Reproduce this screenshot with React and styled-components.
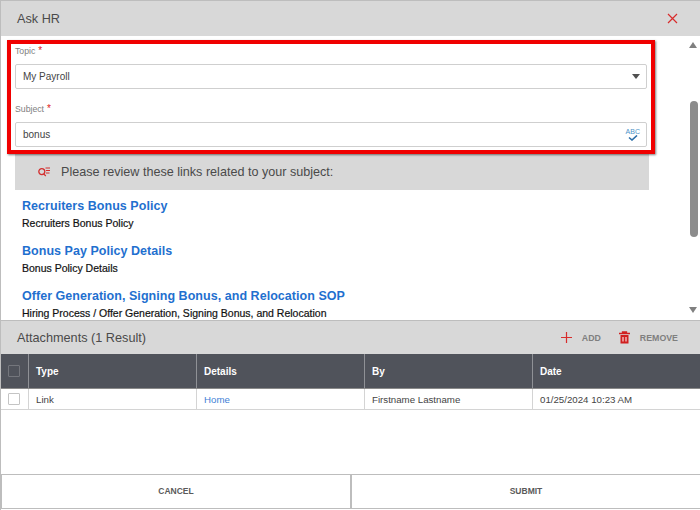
import React from 'react';
import styled, { createGlobalStyle } from 'styled-components';

const Global = createGlobalStyle`
  html, body { margin: 0; padding: 0; background: #fff; }
  body { font-family: "Liberation Sans", Arial, sans-serif; }
  * { box-sizing: border-box; }
`;

const Dialog = styled.div`
  width: 700px;
  height: 510px;
  display: flex;
  flex-direction: column;
  border-left: 1px solid #bdbdbd;
  background: #fff;
  overflow: hidden;
`;

const Bar = styled.div`
  flex: none;
  height: ${({ $h }) => $h}px;
  display: flex;
  align-items: center;
  justify-content: space-between;
  background: #d8d8d8;
  padding: 0 ${({ $right }) => $right}px 0 16px;
  border-top: 1px solid #bdbdbd;
  color: #4a4a4a;
  font-size: 12.7px;
`;

const Close = styled.svg`
  width: 11px;
  height: 11px;
`;

const Body = styled.div`
  position: relative;
  flex: none;
  height: 284px;
  display: flex;
  overflow: hidden;
`;

const Content = styled.div`
  flex: 1;
  padding: 9px 41px 0 14px;
  margin-right: 10px;
  min-width: 0;
`;

const Label = styled.div`
  height: 19px;
  font-size: 8.7px;
  line-height: 12px;
  color: #808080;
  b { color: #e02020; font-weight: 400; font-size: 10px; margin-left: 3px; }
`;

const Field = styled.div`
  height: 25px;
  margin-bottom: ${({ $mb }) => $mb}px;
  margin-right: 2px;
  display: flex;
  align-items: center;
  justify-content: space-between;
  padding: 0 6px 0 7px;
  border: 1px solid #cfcfcf;
  border-radius: 2px;
  font-size: 10px;
  color: #444;
`;

const Caret = styled.span`
  width: 0;
  height: 0;
  border-left: 4px solid transparent;
  border-right: 4px solid transparent;
  border-top: 5px solid #505050;
`;

const Spell = styled.span`
  display: flex;
  flex-direction: column;
  align-items: center;
  font-size: 7px;
  line-height: 7px;
  color: #4f94c8;
  svg { display: block; }
`;

const Notice = styled.div`
  height: 37px;
  margin-top: 6px;
  padding: 0 0 0 23px;
  display: flex;
  align-items: center;
  gap: 11px;
  background: #d8d8d8;
  color: #4a4a4a;
  font-size: 12.6px;
`;

const Links = styled.div`
  padding: 8px 7px 0;
`;

const LinkItem = styled.div`
  height: 45px;
`;

const Title = styled.div`
  font-size: 12.5px;
  line-height: 16px;
  font-weight: 700;
  letter-spacing: 0.04px;
  color: #1f70cf;
`;

const Sub = styled.div`
  margin-top: 3px;
  font-size: 10.5px;
  line-height: 13px;
  color: #111;
  -webkit-text-stroke: 0.2px #111;
`;

const Highlight = styled.div`
  position: absolute;
  left: 6px;
  top: 4px;
  width: 648px;
  height: 114px;
  border: 4px solid #f00000;
  box-shadow: 1px 1px 2px rgba(0, 0, 0, 0.5);
`;

const Scroll = styled.div`
  position: absolute;
  right: 0;
  top: 0;
  bottom: 0;
  width: 11px;
  background: #fff;
`;

const Arrow = styled.span`
  position: absolute;
  left: 0;
  top: ${({ $top }) => $top}px;
  width: 0;
  height: 0;
  border-left: 4.5px solid transparent;
  border-right: 4.5px solid transparent;
  ${({ $up }) => ($up ? 'border-bottom: 6px solid #808080;' : 'border-top: 6px solid #808080;')}
`;

const Thumb = styled.span`
  position: absolute;
  left: 1px;
  top: 65px;
  width: 8px;
  height: 136px;
  border-radius: 4px;
  background: #8c8c8c;
`;

const Actions = styled.div`
  display: flex;
  align-items: center;
  gap: 10px;
`;

const Action = styled.span`
  font-size: 8.8px;
  font-weight: 700;
  color: #7f7f7f;
  margin-right: 8px;
  &:last-child { margin-right: 0; }
`;

const Row = styled.div`
  flex: none;
  display: grid;
  grid-template-columns: 27px 168px 168px 168px 168px;
  height: ${({ $h }) => $h}px;
  background: ${({ $head }) => ($head ? '#50535b' : '#fff')};
  color: ${({ $head }) => ($head ? '#fff' : '#444')};
  font-size: ${({ $head }) => ($head ? 10 : 9.7)}px;
  font-weight: ${({ $head }) => ($head ? 700 : 400)};
  border-bottom: 1px solid ${({ $head }) => ($head ? '#8a8a8a' : '#d4d4d4')};
`;

const Cell = styled.div`
  display: flex;
  align-items: center;
  padding-left: 7px;
  border-left: 1px solid ${({ $head }) => ($head ? '#8f9196' : '#d4d4d4')};
  color: ${({ $link }) => ($link ? '#3f7fd6' : 'inherit')};
  &:first-child { border-left: 0; padding-left: 7px; }
`;

const Check = styled.span`
  width: 12px;
  height: 12px;
  border: 1px solid ${({ $head }) => ($head ? '#74767c' : '#c4c4c4')};
  border-radius: 1px;
`;

const Spacer = styled.div`
  flex: 1;
`;

const Footer = styled.div`
  flex: none;
  height: 35px;
  margin-bottom: 1px;
  display: grid;
  grid-template-columns: 349px 350px;
  border-top: 1px solid #bdbdbd;
  border-bottom: 1px solid #bdbdbd;
`;

const FooterButton = styled.div`
  display: flex;
  align-items: center;
  justify-content: center;
  padding-bottom: 1px;
  font-size: 8.5px;
  font-weight: 700;
  color: #5a5a5a;
  border-left: ${({ $first }) => ($first ? '1px solid #bdbdbd' : '2px solid #bdbdbd')};
`;

const columns = ['Type', 'Details', 'By', 'Date'];

export default function App() {
  return (
    <Dialog>
      <Global />
      <Bar $h={36} $right={22}>
        Ask HR
        <Close viewBox="0 0 11 11">
          <path d="M1 1l9 9M10 1l-9 9" stroke="#d82c2c" strokeWidth="1.2" fill="none" />
        </Close>
      </Bar>
      <Body>
        <Content>
          <Label>Topic<b>*</b></Label>
          <Field $mb={14}>
            My Payroll
            <Caret />
          </Field>
          <Label>Subject<b>*</b></Label>
          <Field $mb={0}>
            bonus
            <Spell>
              ABC
              <svg width="10" height="6" viewBox="0 0 10 6">
                <path d="M1 2.5l3 2.5 5-4.5" stroke="#2b6ea8" strokeWidth="1.6" fill="none" />
              </svg>
            </Spell>
          </Field>
          <Notice>
            <svg width="12" height="10" viewBox="0 0 12 10">
              <circle cx="3.8" cy="4.6" r="3" stroke="#d32f2f" strokeWidth="1.3" fill="none" />
              <path d="M5.8 7l2 2M7.5 1h4.5M8 3.5h4M8 6h3.5" stroke="#d32f2f" strokeWidth="1.1" fill="none" />
            </svg>
            Please review these links related to your subject:
          </Notice>
          <Links>
            <LinkItem>
              <Title>Recruiters Bonus Policy</Title>
              <Sub>Recruiters Bonus Policy</Sub>
            </LinkItem>
            <LinkItem>
              <Title>Bonus Pay Policy Details</Title>
              <Sub>Bonus Policy Details</Sub>
            </LinkItem>
            <LinkItem>
              <Title>Offer Generation, Signing Bonus, and Relocation SOP</Title>
              <Sub>Hiring Process / Offer Generation, Signing Bonus, and Relocation</Sub>
            </LinkItem>
          </Links>
        </Content>
        <Scroll>
          <Arrow $up $top={6} />
          <Thumb />
          <Arrow $top={271} />
        </Scroll>
        <Highlight />
      </Body>
      <Bar $h={34} $right={22}>
        Attachments (1 Result)
        <Actions>
          <svg width="11" height="11" viewBox="0 0 11 11">
            <path d="M5.5 0v11M0 5.5h11" stroke="#d82c2c" strokeWidth="1.2" />
          </svg>
          <Action>ADD</Action>
          <svg width="11" height="13" viewBox="0 0 11 13">
            <path d="M0 2.5h11M3.5 2.5V1h4v1.5" stroke="#d01f1f" strokeWidth="1.3" fill="none" />
            <path d="M1.5 4h8v8.5h-8z" fill="#d01f1f" />
            <path d="M4 6v4.5M7 6v4.5" stroke="#fff" strokeWidth="1" />
          </svg>
          <Action>REMOVE</Action>
        </Actions>
      </Bar>
      <Row $head $h={35}>
        <Cell $head><Check $head /></Cell>
        {columns.map((c) => (
          <Cell $head key={c}>{c}</Cell>
        ))}
      </Row>
      <Row $h={21}>
        <Cell><Check /></Cell>
        <Cell>Link</Cell>
        <Cell $link>Home</Cell>
        <Cell>Firstname Lastname</Cell>
        <Cell>01/25/2024 10:23 AM</Cell>
      </Row>
      <Spacer />
      <Footer>
        <FooterButton $first>CANCEL</FooterButton>
        <FooterButton>SUBMIT</FooterButton>
      </Footer>
    </Dialog>
  );
}
